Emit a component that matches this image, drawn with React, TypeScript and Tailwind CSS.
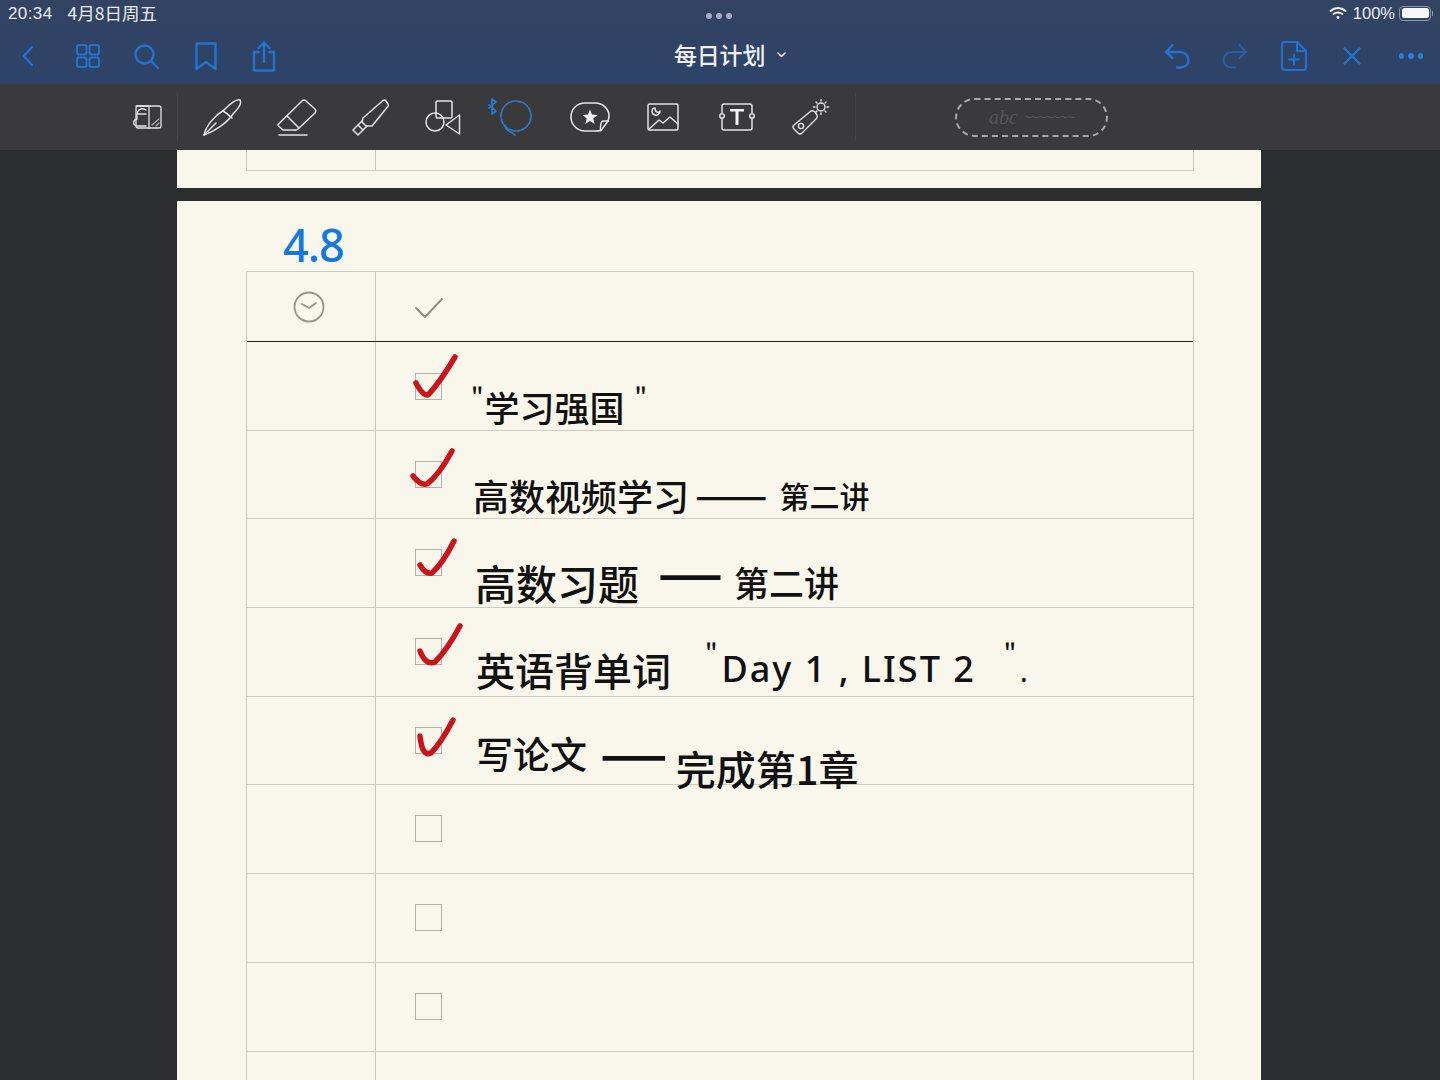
import React from "react";

const BLUE = "#2273d0";
const WHITE = "#e4e4e2";

function Nav({ w, h, ml, children, sw = 2.4 }: { w: number; h: number; ml?: string; children: React.ReactNode; sw?: number }) {
  return (
    <svg width={w} height={h} viewBox={`0 0 ${w} ${h}`} fill="none" stroke={BLUE} strokeWidth={sw} strokeLinecap="round" strokeLinejoin="round" className={`shrink-0 ${ml ?? ""}`}>
      {children}
    </svg>
  );
}

function Tool({ w, h, ml, children, sw = 1.6 }: { w: number; h: number; ml?: string; children: React.ReactNode; sw?: number }) {
  return (
    <svg width={w} height={h} viewBox={`0 0 ${w} ${h}`} fill="none" stroke={WHITE} strokeWidth={sw} strokeLinecap="round" strokeLinejoin="round" className={`shrink-0 ${ml ?? ""}`}>
      {children}
    </svg>
  );
}

function StatusBar() {
  return (
    <div className="relative flex h-[28px] items-center justify-between pb-[2px] pl-[8px] pr-[7px] leading-none text-[#e8ecf2]">
      <div className="flex items-center text-[17px]">
        <span className="tracking-[0.4px]">20:34</span>
        <span className="ml-[15px] text-[17.5px] [font-family:'Noto_Sans_CJK_SC',sans-serif]">4月8日周五</span>
      </div>
      <div className="absolute left-[706px] top-[13px] flex gap-[4px]">
        <span className="h-[6px] w-[6px] rounded-full bg-[#a3aec4]" />
        <span className="h-[6px] w-[6px] rounded-full bg-[#a3aec4]" />
        <span className="h-[6px] w-[6px] rounded-full bg-[#a3aec4]" />
      </div>
      <div className="flex items-center text-[16.5px]">
        <svg width="18" height="14" viewBox="0 0 18 14" fill="none" stroke="#f2f2f2" strokeWidth="2" strokeLinecap="round">
          <path d="M1.5 5 C6 1 12 1 16.5 5" />
          <path d="M4.5 8 C7 6 11 6 13.5 8" />
          <circle cx="9" cy="11.5" r="1.4" fill="#f2f2f2" stroke="none" />
        </svg>
        <span className="ml-[6px]">100%</span>
        <div className="ml-[4px] flex items-center">
          <div className="flex h-[15px] w-[32px] items-center rounded-[4px] border border-[#8f98aa] p-[1.5px]">
            <div className="h-full w-full rounded-[2.5px] bg-[#f7f7f7]" />
          </div>
          <div className="ml-[1px] h-[5px] w-[1px] bg-[#8f98aa]" />
        </div>
      </div>
    </div>
  );
}

function NavBar() {
  return (
    <div className="relative flex h-[56px] items-center justify-between pl-[22px] pr-[17px]">
      <div className="flex items-center">
        <Nav w={12} h={22}>
          <path d="M10 2 L2 11 L10 20" />
        </Nav>
        <Nav w={24} h={24} ml="ml-[42px]" sw={2}>
          <rect x="1" y="1" width="9.5" height="9.5" rx="2" />
          <rect x="13.5" y="1" width="9.5" height="9.5" rx="2" />
          <rect x="1" y="13.5" width="9.5" height="9.5" rx="2" />
          <rect x="13.5" y="13.5" width="9.5" height="9.5" rx="2" />
        </Nav>
        <Nav w={25} h={25} ml="ml-[34px]">
          <circle cx="10.5" cy="10.5" r="9" />
          <path d="M17 17 L24 24" />
        </Nav>
        <Nav w={22} h={29} ml="ml-[36px]">
          <path d="M1.5 1.5 H20.5 V27 L11 20 L1.5 27 Z" />
        </Nav>
        <Nav w={24} h={31} ml="ml-[35px]">
          <path d="M7 11 H2 V29.5 H22 V11 H17" />
          <path d="M12 21 V2 M6.5 7 L12 1.5 L17.5 7" />
        </Nav>
      </div>
      <div className="absolute left-[674px] top-[11px] flex items-center text-[23px] font-medium leading-[30px] tracking-[-0.2px] text-[#eef0f3] [font-family:'Noto_Sans_CJK_SC',sans-serif]">
        <span>每日计划</span>
        <svg width="9" height="6" viewBox="0 0 9 6" fill="none" stroke="#e8ebf0" strokeWidth="1.6" strokeLinecap="round" strokeLinejoin="round" className="ml-[12px] mt-[2px]">
          <path d="M1 1 L4.5 4.5 L8 1" />
        </svg>
      </div>
      <div className="flex items-center">
        <Nav w={26} h={26}>
          <path d="M8.5 2 L2 9 L8.5 15" />
          <path d="M2 9 H16 C21 9 24.5 12.5 24.5 17 C24.5 21.5 21 24.5 16 24.5 H13" />
        </Nav>
        <svg width="26" height="26" viewBox="0 0 26 26" fill="none" stroke="#2c5f9f" strokeWidth="2.2" strokeLinecap="round" strokeLinejoin="round" className="ml-[32px] shrink-0">
          <path d="M17.5 2 L24 9 L17.5 15" />
          <path d="M24 9 H10 C5 9 1.5 12.5 1.5 17 C1.5 21.5 5 24.5 10 24.5 H13" />
        </svg>
        <Nav w={26} h={30} ml="ml-[33px]" sw={2}>
          <path d="M3.5 1 H16 L25 10 V26 Q25 29 22 29 H4 Q1 29 1 26 V3.5 Q1 1 3.5 1 Z" />
          <path d="M16 1 V10 H25" />
          <path d="M13 13.5 V23.5 M8 18.5 H18" />
        </Nav>
        <Nav w={18} h={18} ml="ml-[36px]">
          <path d="M1.5 1.5 L16.5 16.5 M16.5 1.5 L1.5 16.5" />
        </Nav>
        <div className="ml-[38px] flex gap-[4px]">
          <span className="h-[5.5px] w-[5.5px] rounded-full bg-[#1f7fe2]" />
          <span className="h-[5.5px] w-[5.5px] rounded-full bg-[#1f7fe2]" />
          <span className="h-[5.5px] w-[5.5px] rounded-full bg-[#1f7fe2]" />
        </div>
      </div>
    </div>
  );
}

function Toolbar() {
  return (
    <div className="flex h-[66px] items-center bg-[#3a3a3c] pl-[132px]">
      <Tool w={30} h={24} sw={1.3}>
        <rect x="4" y="1" width="25" height="22" rx="2" />
        <path d="M17 1 V23 M4 1 H17" />
        <path d="M5 9 H14 M14 5 C9 2 5 5 5 10 V14 C1 15 0 20 5 21 H14" />
        <path d="M20 20 L27 14 M24 21 L27 18" stroke="#aaa" />
      </Tool>
      <div className="ml-[15px] h-[48px] w-px bg-[#444446]" />
      <Tool w={39} h={37} ml="ml-[25px]" sw={1.5}>
        <path d="M1 36 C3 27 11 17 21 11 C27 5 34 0 37 1 C39 4 35 10 30 15 C24 24 12 32 1 36 Z" />
        <path d="M20 12 C22 13 27 17 29 19" />
        <path d="M1 36 L13 24" />
      </Tool>
      <Tool w={40} h={37} ml="ml-[35px]" sw={1.5}>
        <path d="M1.5 25 L25 2 Q27 0 29 2 L38 10 Q39.5 12 38 14 L21 30 Q19 31.5 17 31 L6 31 L1.5 27 Q0.5 26 1.5 25 Z" />
        <path d="M10 17 L22 29" />
        <path d="M2 36 H30" />
      </Tool>
      <Tool w={37} h={37} ml="ml-[35px]" sw={1.5}>
        <path d="M11 19 L31 1.5 Q33 0.5 34 2 L36 5 Q37 7 35 8.5 L20 27 L14 27 L10 23 Z" />
        <path d="M10 22 L4 28 L1 31 L6 36 L15 27" />
        <path d="M6 26 L11 31" />
      </Tool>
      <Tool w={36} h={36} ml="ml-[36px]" sw={1.5}>
        <rect x="11" y="2" width="16" height="17" rx="1.5" />
        <circle cx="10" cy="23" r="9" />
        <path d="M34.5 16 V35 L21 26 Z" />
      </Tool>
      <svg width="46" height="38" viewBox="0 0 46 38" fill="none" strokeLinecap="round" strokeLinejoin="round" className="ml-[27px] shrink-0">
        <path d="M1 7 L8 13 L4 16 V1 L8 4 L1 10" stroke="#1f7fe2" strokeWidth="1.6" />
        <circle cx="28" cy="18" r="15" stroke="#2f78c6" strokeWidth="1.7" strokeDasharray="5 1.5" />
        <path d="M17 27 C17 32 22 33 27 37" stroke="#2f78c6" strokeWidth="1.7" />
      </svg>
      <Tool w={40} h={30} ml="ml-[36px]" sw={1.6}>
        <path d="M15 1 H25 C33 1 39 7 39 14 C39 16 38.5 17.5 38 19 L31 28.5 C29 29 27 29 25 29 H15 C7 29 1 22.5 1 15 C1 7 7 1 15 1 Z" />
        <path d="M38.5 19 H33 Q30 20 30.5 28.5" />
        <path d="M20 7.5 L22 12.5 L27.5 13 L23.3 16.6 L24.6 22 L20 19 L15.4 22 L16.7 16.6 L12.5 13 L18 12.5 Z" fill="#efefef" stroke="none" />
      </Tool>
      <Tool w={32} h={28} ml="ml-[37px]" sw={1.5}>
        <rect x="1" y="1" width="30" height="26" rx="1.5" />
        <path d="M8 5 C4 5 4 11 8 12 C11 13 13 10 13 8 C12 10 8 10 8 5 Z" />
        <path d="M2 26 L12 17 L16 20 L23 14 L31 21" />
      </Tool>
      <Tool w={36} h={28} ml="ml-[40px]" sw={1.5}>
        <path d="M3 10 V3 Q3 1 5 1 H31 Q33 1 33 3 V10 M33 16 V25 Q33 27 31 27 H5 Q3 27 3 25 V16" />
        <circle cx="3" cy="13" r="2.2" />
        <circle cx="33" cy="13" r="2.2" />
        <path d="M11 6 H25 V8.5 H19.5 V22 H16.5 V8.5 H11 Z" fill="#f2f2f2" stroke="none" />
      </Tool>
      <Tool w={38} h={36} ml="ml-[37px]" sw={1.4}>
        <path d="M2 26 L19 12 Q21 11 23 13 L25 16 Q26 18 24 20 L10 34 Q8 36 6 34 L2 30 Q0 28 2 26 Z" />
        <circle cx="9" cy="27" r="2.6" />
        <circle cx="29" cy="8" r="4" />
        <path d="M29 0.5 V2 M29 14 V15.5 M21.5 8 H23 M35 8 H36.5 M24 3 L25 4 M33 12 L34 13 M34 3 L33 4 M24 13 L25 12" />
      </Tool>
      <div className="ml-[25px] h-[48px] w-px bg-[#444446]" />
      <div className="ml-[99px] flex h-[39px] w-[153px] items-center justify-center gap-[6px] rounded-full border-2 border-dashed border-[#a9a9a9] text-[#565658]">
        <span className="text-[20px] italic leading-none [font-family:'Liberation_Serif',serif]">abc</span>
        <span className="text-[14px] leading-none tracking-[-1px] [font-family:'Liberation_Sans',sans-serif]">~~~~~~~</span>
      </div>
    </div>
  );
}

function RedCheck({ d }: { d: string }) {
  return (
    <svg width="80" height="60" viewBox="0 0 80 60" fill="none" className="pointer-events-none absolute left-[19px] top-0 z-10 overflow-visible">
      <path d={d} stroke="#c9141c" strokeWidth="5.5" strokeLinecap="round" strokeLinejoin="round" />
    </svg>
  );
}

const hand = "[font-family:'Noto_Sans_CJK_SC','Noto_Sans',sans-serif] font-medium text-[#111] whitespace-pre";

type RowData = { check?: string; box?: string; text?: React.ReactNode };

const rows: RowData[] = [
  {
    check: "M21 41 Q29 56 34 52 Q45 40 60 15",
    box: "mt-[31px]",
    text: (
      <div className={`absolute left-[95px] top-[41px] flex items-start ${hand}`}>
        <span className="text-[24px] leading-none">"</span>
        <span className="ml-[1px] text-[35px] leading-[48px]">学习强国</span>
        <span className="ml-[10px] text-[24px] leading-none">"</span>
      </div>
    ),
  },
  {
    check: "M18 45 Q26 55 32 53 Q44 44 57 20",
    box: "mt-[30px]",
    text: (
      <div className={`absolute left-[97px] top-[37px] flex items-center ${hand}`}>
        <span className="text-[36px] leading-[54px]">高数视频学习</span>
        <span className="ml-[6px] -translate-y-[3px] text-[43px] leading-[54px]">——</span>
        <span className="ml-[12px] text-[30px] leading-[54px]">第二讲</span>
      </div>
    ),
  },
  {
    check: "M25 46 Q31 56 37 54 Q48 44 59 22",
    box: "mt-[30px]",
    text: (
      <div className={`absolute left-[99px] top-[34px] flex items-center ${hand}`}>
        <span className="text-[41px] leading-[58px]">高数习题</span>
        <span className="ml-[18px] -translate-y-[15px] text-[75px] font-normal leading-[58px]">—</span>
        <span className="ml-[10px] text-[35px] leading-[58px]">第二讲</span>
      </div>
    ),
  },
  {
    check: "M25 43 Q31 58 40 54 Q52 42 65 18",
    box: "mt-[30px]",
    text: (
      <div className={`absolute left-[100px] top-[31px] flex items-center ${hand}`}>
        <span className="text-[39px] leading-[60px]">英语背单词</span>
        <span className="ml-[34px] -translate-y-[18px] text-[24px] leading-[60px]">"</span>
        <span className="ml-[4px] text-[36px] leading-[60px] tracking-[2px] [font-family:'Noto_Sans',sans-serif]">Day 1 , LIST 2</span>
        <span className="ml-[28px] -translate-y-[18px] text-[24px] leading-[60px]">"</span>
        <span className="ml-[4px] translate-y-[3px] text-[24px] leading-[60px]">.</span>
      </div>
    ),
  },
  {
    check: "M25 39 Q27 60 36 56 Q46 46 58 23",
    box: "mt-[30px]",
    text: (
      <div className={`absolute left-[100px] top-[26px] flex items-center ${hand}`}>
        <span className="text-[37px] leading-[60px]">写论文</span>
        <span className="ml-[12px] -translate-y-[7px] text-[78px] font-normal leading-[60px]">—</span>
        <span className="ml-[7px] translate-y-[15px] text-[40px] leading-[60px]">完成第1章</span>
      </div>
    ),
  },
  { box: "mt-[30px]" },
  { box: "mt-[30px]" },
  { box: "mt-[30px]" },
  {},
];

function Row({ data }: { data: RowData }) {
  return (
    <div className="flex h-[88.7px] border-b border-[#cfcdc3]">
      <div className="w-[129px] shrink-0 border-r border-[#c9c7bd]" />
      <div className="relative flex-1 pl-[39px]">
        {data.box ? <div className={`h-[27px] w-[27px] border border-[#b4b2a9] ${data.box}`} /> : null}
        {data.check ? <RedCheck d={data.check} /> : null}
        {data.text}
      </div>
    </div>
  );
}

export default function App() {
  return (
    <div className="flex h-[1080px] w-[1440px] flex-col overflow-hidden bg-[#2c2d2f] [font-family:'Liberation_Sans','Noto_Sans_CJK_SC',sans-serif]">
      <div className="h-[84px] shrink-0 bg-gradient-to-b from-[#334361] to-[#2d4369]">
        <StatusBar />
        <NavBar />
      </div>
      <Toolbar />
      <div className="flex min-h-0 flex-1 flex-col items-start overflow-hidden pl-[177px]">
        <div className="h-[38px] w-[1084px] shrink-0 bg-[#f9f7ec] pl-[69px] pr-[67px]">
          <div className="flex h-[21px] border-x border-b border-[#cfcdc3]">
            <div className="w-[129px] border-r border-[#c9c7bd]" />
          </div>
        </div>
        <div className="mt-[13px] w-[1084px] flex-1 bg-[#f9f7ec] pl-[69px] pr-[67px]">
          <div className="flex h-[70px] items-center pl-[37px] pt-[17px] text-[45px] font-medium leading-none tracking-[-1px] text-[#1479dc] [font-family:'Noto_Sans',sans-serif]">
            4.8
          </div>
          <div className="border-x border-t border-[#cfcdc3]">
            <div className="flex h-[70px] border-b border-[#222]">
              <div className="flex w-[129px] shrink-0 items-center justify-center border-r border-[#c9c7bd] pr-[4px]">
                <svg width="32" height="32" viewBox="0 0 32 32" fill="none" stroke="#96948c" strokeWidth="1.8" strokeLinecap="round" strokeLinejoin="round">
                  <circle cx="16" cy="16" r="14.5" />
                  <path d="M9 13 L16 17 L23 12" />
                </svg>
              </div>
              <div className="flex flex-1 items-center pl-[39px] pt-[3px]">
                <svg width="28" height="22" viewBox="0 0 28 22" fill="none" stroke="#8f8d86" strokeWidth="2" strokeLinecap="round" strokeLinejoin="round">
                  <path d="M1 11 L10 20 L27 2" />
                </svg>
              </div>
            </div>
            {rows.map((r, i) => (
              <Row key={i} data={r} />
            ))}
          </div>
        </div>
      </div>
    </div>
  );
}
